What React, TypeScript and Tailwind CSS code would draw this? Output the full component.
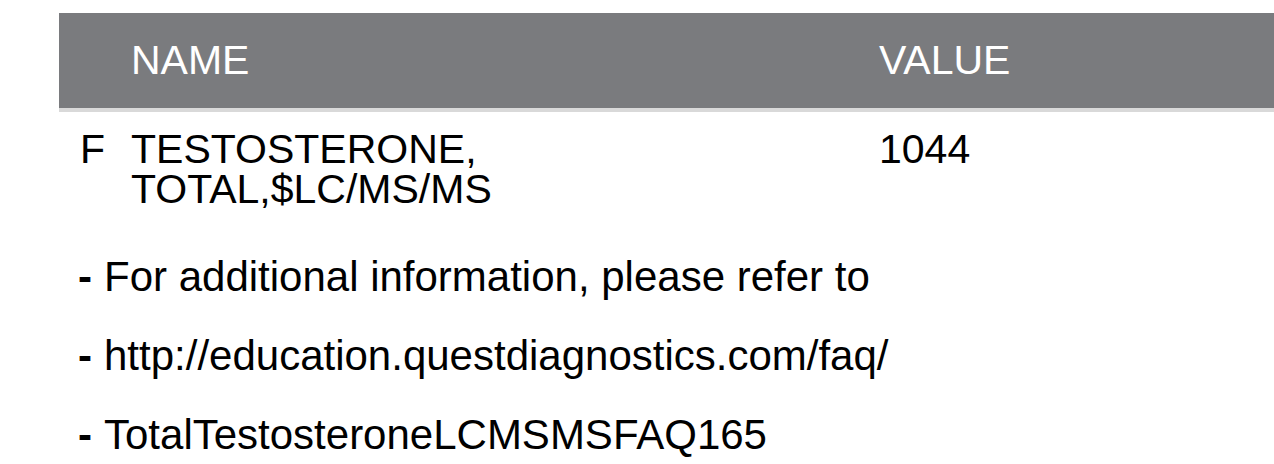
const notes = [
  'For additional information, please refer to',
  'http://education.questdiagnostics.com/faq/',
  'TotalTestosteroneLCMSMSFAQ165',
]

export default function App() {
  return (
    <div className="min-h-[464px] bg-white pt-[13px] pl-[59px] text-black" style={{ fontFamily: '"Liberation Sans", Arial, sans-serif' }}>
      <div className="flex h-[99px] items-center border-b-4 border-[#d9d9d9] bg-[#7a7b7e] text-[41px] font-light text-white">
        <div className="w-[820px] pl-[72px]">NAME</div>
        <div>VALUE</div>
      </div>

      <div className="mt-[17px] flex text-[41px] leading-[40px]">
        <div className="w-[72px] pl-[21px]">F</div>
        <div className="w-[748px]">
          TESTOSTERONE,
          <br />
          TOTAL,$LC/MS/MS
        </div>
        <div>1044</div>
      </div>

      <div className="mt-[48px] flex flex-col gap-[39px] pl-[19px] text-[42px] leading-[40px]">
        {notes.map((n) => (
          <div key={n} className="flex">
            <span className="w-[26px] font-bold">-</span>
            <span>{n}</span>
          </div>
        ))}
      </div>
    </div>
  )
}
